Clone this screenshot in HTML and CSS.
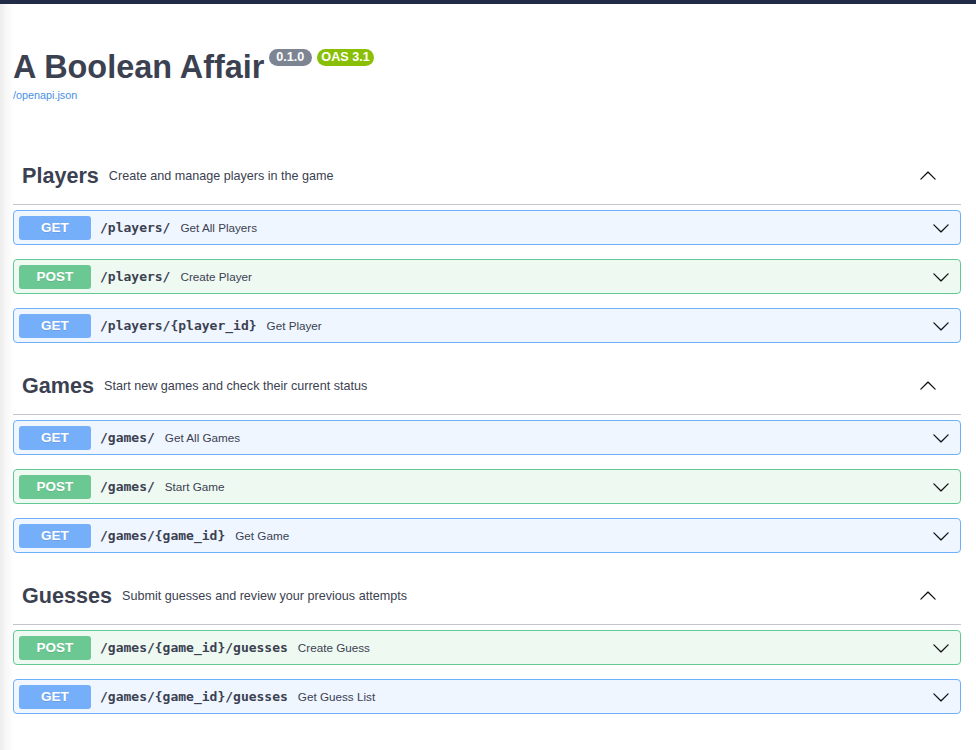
FILE: index.html
```html
<!DOCTYPE html>
<html lang="en">
<head>
<meta charset="utf-8">
<title>A Boolean Affair - Swagger UI</title>
<link rel="stylesheet" href="styles.css">
</head>
<body>
<div class="topbar"></div>
<main class="wrap">
  <header class="info">
    <h2 class="title">A Boolean Affair<span class="badge ver">0.1.0</span><span class="badge oas">OAS 3.1</span></h2>
    <a class="base-url" href="#">/openapi.json</a>
  </header>

  <section class="tag">
    <div class="tag-head">
      <h3>Players</h3>
      <span class="tag-desc">Create and manage players in the game</span>
      <svg class="chev-up" viewBox="0 0 20 20"><path d="M17.418 6.109c.272-.268.709-.268.979 0s.271.701 0 .969l-7.908 7.83c-.27.268-.707.268-.979 0l-7.908-7.83c-.27-.268-.27-.701 0-.969.271-.268.709-.268.979 0L10 13.25l7.418-7.141z"/></svg>
    </div>
    <div class="ops">
      <div class="op get"><span class="method">GET</span><span class="path">/players/</span><span class="summary">Get All Players</span><svg class="chev" viewBox="0 0 20 20"><path d="M17.418 6.109c.272-.268.709-.268.979 0s.271.701 0 .969l-7.908 7.83c-.27.268-.707.268-.979 0l-7.908-7.830c-.27-.268-.27-.701 0-.969.271-.268.709-.268.979 0L10 13.25l7.418-7.141z"/></svg></div>
      <div class="op post"><span class="method">POST</span><span class="path">/players/</span><span class="summary">Create Player</span><svg class="chev" viewBox="0 0 20 20"><path d="M17.418 6.109c.272-.268.709-.268.979 0s.271.701 0 .969l-7.908 7.83c-.27.268-.707.268-.979 0l-7.908-7.83c-.27-.268-.27-.701 0-.969.271-.268.709-.268.979 0L10 13.25l7.418-7.141z"/></svg></div>
      <div class="op get"><span class="method">GET</span><span class="path">/players/{player_id}</span><span class="summary">Get Player</span><svg class="chev" viewBox="0 0 20 20"><path d="M17.418 6.109c.272-.268.709-.268.979 0s.271.701 0 .969l-7.908 7.83c-.27.268-.707.268-.979 0l-7.908-7.83c-.27-.268-.27-.701 0-.969.271-.268.709-.268.979 0L10 13.25l7.418-7.141z"/></svg></div>
    </div>
  </section>

  <section class="tag">
    <div class="tag-head">
      <h3>Games</h3>
      <span class="tag-desc">Start new games and check their current status</span>
      <svg class="chev-up" viewBox="0 0 20 20"><path d="M17.418 6.109c.272-.268.709-.268.979 0s.271.701 0 .969l-7.908 7.83c-.27.268-.707.268-.979 0l-7.908-7.83c-.27-.268-.27-.701 0-.969.271-.268.709-.268.979 0L10 13.25l7.418-7.141z"/></svg>
    </div>
    <div class="ops">
      <div class="op get"><span class="method">GET</span><span class="path">/games/</span><span class="summary">Get All Games</span><svg class="chev" viewBox="0 0 20 20"><path d="M17.418 6.109c.272-.268.709-.268.979 0s.271.701 0 .969l-7.908 7.83c-.27.268-.707.268-.979 0l-7.908-7.83c-.27-.268-.27-.701 0-.969.271-.268.709-.268.979 0L10 13.25l7.418-7.141z"/></svg></div>
      <div class="op post"><span class="method">POST</span><span class="path">/games/</span><span class="summary">Start Game</span><svg class="chev" viewBox="0 0 20 20"><path d="M17.418 6.109c.272-.268.709-.268.979 0s.271.701 0 .969l-7.908 7.83c-.27.268-.707.268-.979 0l-7.908-7.83c-.27-.268-.27-.701 0-.969.271-.268.709-.268.979 0L10 13.25l7.418-7.141z"/></svg></div>
      <div class="op get"><span class="method">GET</span><span class="path">/games/{game_id}</span><span class="summary">Get Game</span><svg class="chev" viewBox="0 0 20 20"><path d="M17.418 6.109c.272-.268.709-.268.979 0s.271.701 0 .969l-7.908 7.83c-.27.268-.707.268-.979 0l-7.908-7.83c-.27-.268-.27-.701 0-.969.271-.268.709-.268.979 0L10 13.25l7.418-7.141z"/></svg></div>
    </div>
  </section>

  <section class="tag">
    <div class="tag-head">
      <h3>Guesses</h3>
      <span class="tag-desc">Submit guesses and review your previous attempts</span>
      <svg class="chev-up" viewBox="0 0 20 20"><path d="M17.418 6.109c.272-.268.709-.268.979 0s.271.701 0 .969l-7.908 7.83c-.27.268-.707.268-.979 0l-7.908-7.83c-.27-.268-.27-.701 0-.969.271-.268.709-.268.979 0L10 13.25l7.418-7.141z"/></svg>
    </div>
    <div class="ops">
      <div class="op post"><span class="method">POST</span><span class="path">/games/{game_id}/guesses</span><span class="summary">Create Guess</span><svg class="chev" viewBox="0 0 20 20"><path d="M17.418 6.109c.272-.268.709-.268.979 0s.271.701 0 .969l-7.908 7.83c-.27.268-.707.268-.979 0l-7.908-7.83c-.27-.268-.27-.701 0-.969.271-.268.709-.268.979 0L10 13.25l7.418-7.141z"/></svg></div>
      <div class="op get"><span class="method">GET</span><span class="path">/games/{game_id}/guesses</span><span class="summary">Get Guess List</span><svg class="chev" viewBox="0 0 20 20"><path d="M17.418 6.109c.272-.268.709-.268.979 0s.271.701 0 .969l-7.908 7.83c-.27.268-.707.268-.979 0l-7.908-7.83c-.27-.268-.27-.701 0-.969.271-.268.709-.268.979 0L10 13.25l7.418-7.141z"/></svg></div>
    </div>
  </section>
</main>
</body>
</html>
```

FILE: styles.css
```css
html, body {
  margin: 0;
  padding: 0;
}
body {
  font-family: "Liberation Sans", Arial, sans-serif;
  color: #3b4151;
  background: linear-gradient(90deg, #ececec 0, #f7f7f7 6px, #ffffff 14px) no-repeat;
  background-color: #ffffff;
  min-height: 750px;
}
.topbar {
  height: 4px;
  background: #1f2b47;
}
.wrap {
  width: 948px;
  margin-left: 13px;
}
.info {
  padding-top: 45px;
  padding-bottom: 45px;
}
.title {
  margin: 0;
  font-size: 32.4px;
  line-height: 37px;
  font-weight: 700;
  color: #3b4151;
}
.badge {
  display: inline-block;
  vertical-align: top;
  font-size: 12.6px;
  line-height: 13px;
  font-weight: 700;
  color: #ffffff;
  border-radius: 57px;
  padding: 2px 7px;
}
.ver {
  background: #7d8492;
  margin-left: 5px;
  padding: 2px 8px 2px 7px;
}
.oas {
  background: #89bf04;
  margin-left: 5px;
  padding: 2px 4px;
}
.base-url {
  display: block;
  margin-top: 3px;
  font-size: 10.8px;
  line-height: 13px;
  color: #4990e2;
  text-decoration: none;
}
.tag-head {
  box-sizing: border-box;
  height: 58px;
  display: flex;
  align-items: center;
  padding: 0 24px 0 9px;
  border-bottom: 1px solid #c4c6cb;
}
.tag-head h3 {
  margin: 0;
  font-size: 21.6px;
  font-weight: 700;
  color: #3b4151;
}
.tag-desc {
  margin-left: 10px;
  font-size: 12.6px;
  color: #3b4151;
  flex: 1;
}
.chev-up {
  width: 18px;
  height: 18px;
  transform: rotate(180deg);
  fill: #111111;
}
.ops {
  padding-top: 5px;
}
.op {
  box-sizing: border-box;
  height: 35px;
  display: flex;
  align-items: center;
  padding: 0 10px 0 5px;
  margin-bottom: 14px;
  border: 1px solid;
  border-radius: 4px;
}
.op.get {
  border-color: #6eaffa;
  background: #eff6ff;
}
.op.post {
  border-color: #62c994;
  background: #eef9f2;
}
.method {
  width: 72px;
  height: 24px;
  line-height: 24px;
  text-align: center;
  border-radius: 3px;
  font-size: 13.5px;
  font-weight: 700;
  color: #ffffff;
  text-shadow: 0 1px 0 rgba(0, 0, 0, 0.1);
}
.get .method {
  background: #75aef9;
}
.post .method {
  background: #6cc893;
}
.path {
  margin-left: 9px;
  font-family: "DejaVu Sans Mono", monospace;
  font-size: 13px;
  font-weight: 700;
  color: #3b4151;
}
.summary {
  margin-left: 10px;
  font-size: 11.7px;
  color: #3b4151;
  flex: 1;
}
.chev {
  width: 18px;
  height: 18px;
  fill: #111111;
}
```
